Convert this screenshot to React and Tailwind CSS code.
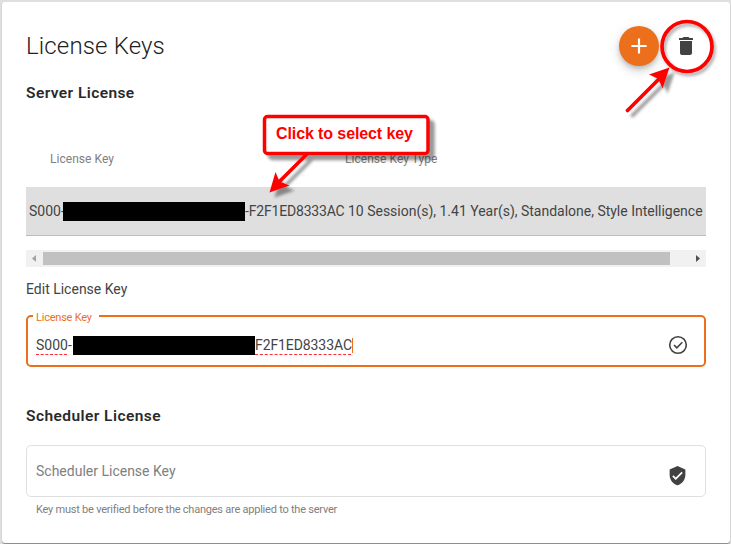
import { MdAdd, MdDelete, MdVerifiedUser } from "react-icons/md";

function Header() {
  return (
    <header className="flex h-[72px] items-start justify-between pt-6">
      <h1 className="mt-[4px] text-[24px] leading-8 font-light tracking-[0.15px] text-[#212121]">License Keys</h1>
      <div className="flex items-center">
        <button className="flex size-10 items-center justify-center rounded-full bg-[#ec701b] text-white shadow-[0_3px_5px_-1px_rgba(0,0,0,0.2),0_6px_10px_rgba(0,0,0,0.1),0_1px_14px_rgba(0,0,0,0.08)]">
          <MdAdd size={26} />
        </button>
        <button className="ml-[15px] mr-[8px] text-[#424242]">
          <MdDelete size={24} />
        </button>
      </div>
    </header>
  );
}

function Scrollbar() {
  return (
    <div className="mt-[14px] flex h-[17px] items-center bg-[#f1f1f1]">
      <svg className="w-[17px]" height="17" viewBox="0 0 17 17"><path d="M10 5v7L6 8.5z" fill="#a3a3a3" /></svg>
      <div className="h-[13px] w-[627px] bg-[#c1c1c1]" />
      <svg className="ml-auto" width="17" height="17" viewBox="0 0 17 17"><path d="M7 5v7l4-3.5z" fill="#505050" /></svg>
    </div>
  );
}

function Annotations() {
  return (
    <svg className="pointer-events-none absolute inset-0" width="731" height="544" viewBox="0 0 731 544">
      <defs>
        <filter id="shadow" x="-30%" y="-30%" width="170%" height="170%">
          <feDropShadow dx="5" dy="5" stdDeviation="1.8" floodColor="#000" floodOpacity="0.4" />
        </filter>
        <filter id="ringShadow" x="-30%" y="-30%" width="170%" height="170%">
          <feDropShadow dx="2" dy="3" stdDeviation="1.5" floodColor="#000" floodOpacity="0.3" />
        </filter>
      </defs>
      <g filter="url(#shadow)">
        <path d="M309 152 278 183" stroke="#f00" strokeWidth="3.8" />
        <path d="M269.500 192.500 275.500 172 279.500 181.500 289.500 185.500z" fill="#f00" />
        <rect x="264.500" y="116.500" width="163.500" height="37" rx="3" fill="#fff" stroke="#f00" strokeWidth="3.500" />
      </g>
      <g filter="url(#shadow)">
        <path d="M627.500 110.500 660 78" stroke="#f00" strokeWidth="3.800" strokeLinecap="round" />
        <path d="M669.500 67.500 649 74.500 658.500 79 662.500 88.500z" fill="#f00" />
      </g>
      <circle cx="687" cy="46.500" r="25" fill="none" stroke="#f00" strokeWidth="3.700" filter="url(#ringShadow)" />
    </svg>
  );
}

export default function App() {
  return (
    <div className="relative h-[544px] w-[731px] overflow-hidden bg-[#dfdfdf] pt-[2px] pr-[1px] pb-[1px] pl-[2px] font-['Roboto',sans-serif] text-[#444]">
      <main className="h-[541px] rounded-[3px] bg-white px-6 shadow-[0_1px_1px_rgba(0,0,0,0.4)]">
        <Header />
        <h2 className="mt-[9px] text-[15.5px] leading-5 font-semibold tracking-[0.42px] text-[#2a2a2a]">Server License</h2>
        <div className="mt-[26px] flex h-[59px] items-center pl-6 text-[12px] tracking-[0.04px] text-[#808080]">
          <span className="w-[295px]">License Key</span>
          <span>License Key Type</span>
        </div>
        <div className="mt-[-1px] flex h-[49px] items-center border-b border-[#bdbdbd] bg-[#dfdfdf] pl-[3px] text-[14px] whitespace-nowrap">
          <span className="w-[34px] shrink-0">S000-</span>
          <span className="h-[19px] w-[182px] shrink-0 bg-black" />
          <span className="w-[103px] shrink-0 tracking-[-0.18px]">-F2F1ED8333AC</span>
          <span className="tracking-[-0.01px]">10 Session(s), 1.41 Year(s), Standalone, Style Intelligence</span>
        </div>
        <Scrollbar />
        <h3 className="mt-[12px] text-[14px] leading-5">Edit License Key</h3>
        <div className="relative mt-[16px] flex h-[52px] items-center rounded-[5px] border-2 border-[#ec701b] pl-[8px] pt-[8px] text-[14px]">
          <label className="absolute -top-[6px] left-[5px] bg-white pr-[7px] pl-[3px] text-[11px] leading-[14px] tracking-[-0.22px] text-[#ec701b]">License Key</label>
          <span className="w-[37px]"><span className="underline decoration-red-500 decoration-dashed decoration-1 underline-offset-[4px]">S000</span>-</span>
          <span className="h-[19px] w-[182px] bg-black" />
          <span className="tracking-[-0.09px] underline decoration-red-500 decoration-dashed decoration-1 underline-offset-[4px]">F2F1ED8333AC</span>
          <span className="h-[15px] w-px bg-[#ec701b]" />
          <svg className="mr-[16px] ml-auto" width="20" height="20" viewBox="0 0 20 20" fill="none" stroke="#424242" strokeWidth="1.600">
            <circle cx="10" cy="10" r="8.300" /><path d="m6 10 2.800 2.800 5.500-5.500" />
          </svg>
        </div>
        <h2 className="mt-[39px] text-[15.5px] leading-5 font-semibold tracking-[0.44px] text-[#2a2a2a]">Scheduler License</h2>
        <div className="mt-[19px] flex h-[52px] items-center rounded-[5px] border border-[#dfdfdf] pl-[9px] text-[14px] text-[#808080]">
          <span className="mt-px">Scheduler License Key</span>
          <MdVerifiedUser size={21} className="mt-[8px] mr-[17px] ml-auto text-[#424242]" />
        </div>
        <p className="mt-[5px] pl-[10px] text-[11px] leading-[15px] tracking-[-0.23px] text-[#808080]">Key must be verified before the changes are applied to the server</p>
      </main>
      <Annotations />
      <span className="absolute top-[124px] left-[276px] font-['Liberation_Sans',sans-serif] text-[16px] leading-[19px] font-bold tracking-[-0.1px] text-[#f00]">Click to select key</span>
    </div>
  );
}
